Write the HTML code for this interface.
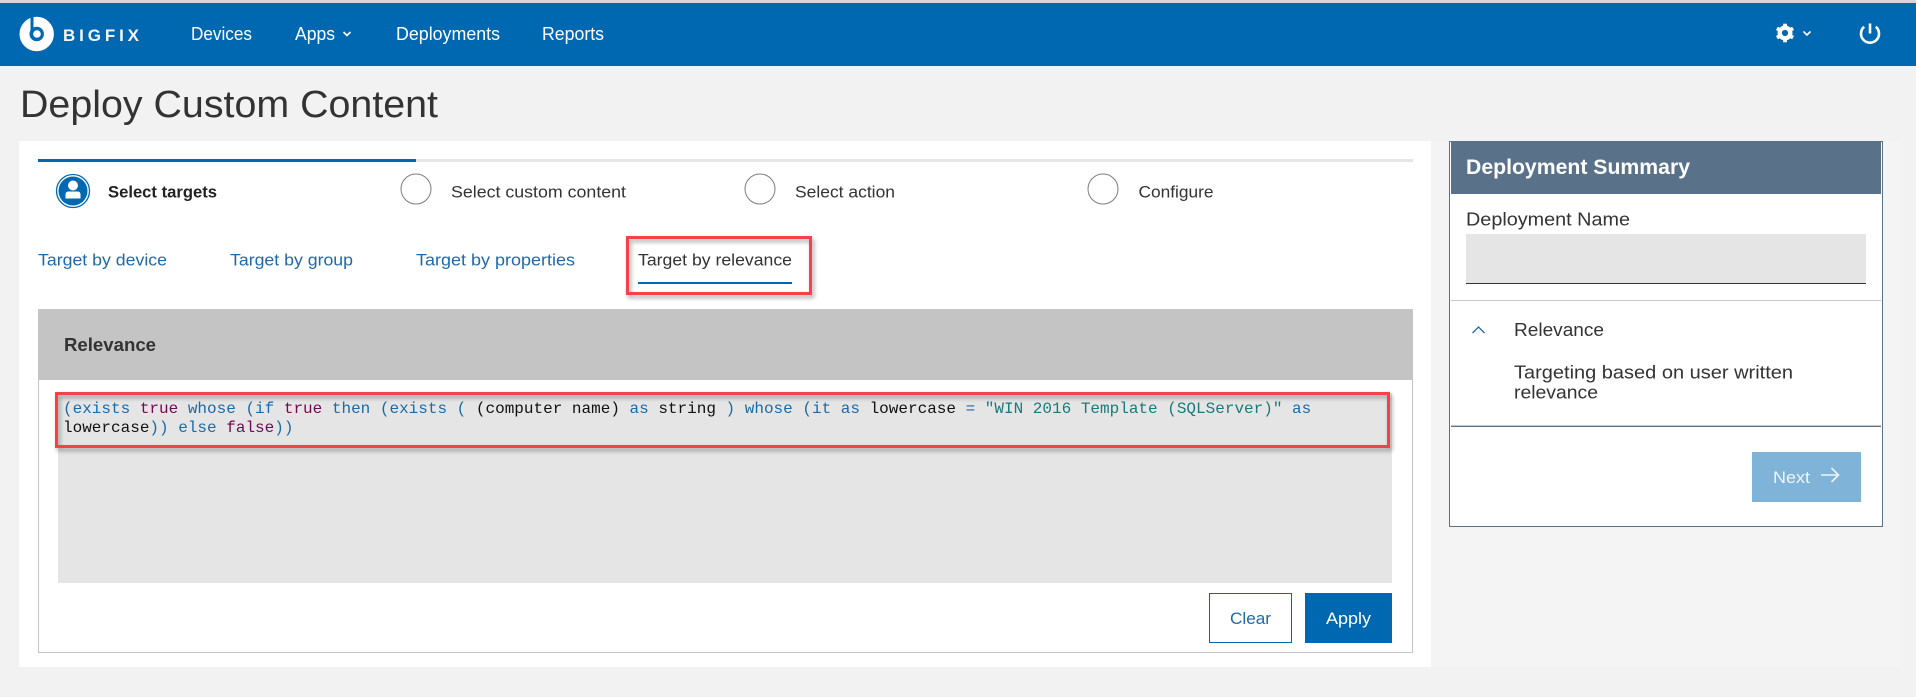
<!DOCTYPE html>
<html lang="en"><head><meta charset="utf-8"><title>Deploy Custom Content</title>
<style>
html,body{margin:0;padding:0;width:1916px;height:697px;overflow:hidden;background:#f2f2f2}
svg{display:block}
text{font-family:"Liberation Sans",Arial,sans-serif;fill:#333}
.m{font-family:"Liberation Mono",monospace;font-size:16px;white-space:pre}
.nav{fill:#fff;font-size:18px}
.link{fill:#1f69ab;font-size:17px}
.bl{fill:#1c6aa6}.pu{fill:#6f0a55}.bk{fill:#111}.te{fill:#1a7a7a}
.red{fill:none;stroke:#f44347;stroke-width:3;filter:drop-shadow(2px 3px 2px rgba(0,0,0,.35))}
</style></head><body>
<svg width="1916" height="697" viewBox="0 0 1916 697" xmlns="http://www.w3.org/2000/svg">
<rect width="1916" height="697" fill="#f2f2f2"/>
<rect width="1916" height="3" fill="#d6d6d6"/>
<rect y="3" width="1916" height="63" fill="#0067b1"/>

<!-- logo -->
<circle cx="36.700" cy="34" r="12.200" fill="none" stroke="#fff" stroke-width="10"/>
<path d="M30.500 15 L33.500 15 L33.500 29 L30.500 32 Z" fill="#0067b1"/>
<circle cx="37" cy="34" r="3.800" fill="#fff"/>
<text x="63" y="41" font-size="17" font-weight="bold" style="fill:#f4f8fb" textLength="76" lengthAdjust="spacing">BIGFIX</text>

<!-- nav -->
<text class="nav" x="191" y="40" textLength="61" lengthAdjust="spacingAndGlyphs">Devices</text>
<text class="nav" x="295" y="40" textLength="40" lengthAdjust="spacingAndGlyphs">Apps</text>
<path d="M343.500 32 L347 35.500 L350.500 32" fill="none" stroke="#fff" stroke-width="1.600"/>
<text class="nav" x="396" y="40" textLength="104" lengthAdjust="spacingAndGlyphs">Deployments</text>
<text class="nav" x="542" y="40" textLength="62" lengthAdjust="spacingAndGlyphs">Reports</text>

<!-- gear -->
<g transform="translate(1785 33)">
<circle r="5.300" fill="none" stroke="#fff" stroke-width="4.400"/>
<g stroke="#fff" stroke-width="3.800" stroke-linecap="butt">
<path d="M0 -9.300V-6"/><path d="M0 9.300V6"/><path d="M-8.100 -4.650L-5.200 -3"/><path d="M8.100 -4.650L5.200 -3"/><path d="M-8.100 4.650L-5.200 3"/><path d="M8.100 4.650L5.200 3"/>
</g></g>
<path d="M1803.500 31.500 L1807 35 L1810.500 31.500" fill="none" stroke="#fff" stroke-width="1.600"/>
<!-- power -->
<path d="M1864.200 26.800 A9 9 0 1 0 1875.800 26.800" fill="none" stroke="#fff" stroke-width="2.600"/>
<path d="M1870 23.500V33.500" stroke="#fff" stroke-width="2.600"/>

<text x="20" y="117" font-size="38" textLength="418" lengthAdjust="spacingAndGlyphs">Deploy Custom Content</text>

<!-- main panels -->
<rect x="1431" y="141" width="469" height="526" fill="#f4f4f4"/>
<rect x="19" y="141" width="1412" height="526" fill="#fff"/>

<!-- stepper -->
<rect x="38" y="159" width="1375" height="3" fill="#e5e5e5"/>
<rect x="38" y="159" width="378" height="3" fill="#0067b1"/>
<circle cx="73" cy="191" r="16.500" fill="#fff" stroke="#0067b1" stroke-width="1.300"/>
<circle cx="73" cy="191" r="14.500" fill="#0067b1"/>
<circle cx="73" cy="185.500" r="5" fill="#fff"/>
<path d="M65.500 198.500V194.500Q65.500 191.500 68.500 191.500H77.500Q80.500 191.500 80.500 194.500V198.500Z" fill="#fff"/>
<g fill="#fff" stroke="#7d7d7d" stroke-width="1">
<circle cx="416" cy="189" r="15"/><circle cx="760" cy="189" r="15"/><circle cx="1103" cy="189" r="15"/>
</g>
<g font-size="17">
<text x="108" y="197.500" font-weight="bold" style="fill:#222" textLength="109" lengthAdjust="spacingAndGlyphs">Select targets</text>
<text x="451" y="197.500" textLength="175" lengthAdjust="spacingAndGlyphs">Select custom content</text>
<text x="795" y="197.500" textLength="100" lengthAdjust="spacingAndGlyphs">Select action</text>
<text x="1138.500" y="197.500" textLength="75" lengthAdjust="spacingAndGlyphs">Configure</text>
</g>

<!-- tabs -->
<text class="link" x="38" y="265.500" textLength="129" lengthAdjust="spacingAndGlyphs">Target by device</text>
<text class="link" x="230" y="265.500" textLength="123" lengthAdjust="spacingAndGlyphs">Target by group</text>
<text class="link" x="416" y="265.500" textLength="159" lengthAdjust="spacingAndGlyphs">Target by properties</text>
<text x="638" y="265.500" font-size="17" textLength="154" lengthAdjust="spacingAndGlyphs">Target by relevance</text>
<rect x="638" y="282" width="154" height="2" fill="#0067b1"/>
<rect class="red" x="627.500" y="237.500" width="183" height="56"/>

<!-- relevance box -->
<rect x="38.500" y="309.500" width="1374" height="343" fill="#fff" stroke="#c4c4c4"/>
<rect x="38" y="309" width="1375" height="71" fill="#c4c4c4"/>
<text x="64" y="351" font-size="18" font-weight="bold" textLength="92" lengthAdjust="spacingAndGlyphs">Relevance</text>
<rect x="58" y="393" width="1334" height="190" fill="#e5e5e5"/>
<text class="m" x="63" y="413" xml:space="preserve"><tspan class="bl">(exists </tspan><tspan class="pu">true </tspan><tspan class="bl">whose (if </tspan><tspan class="pu">true </tspan><tspan class="bl">then (exists ( </tspan><tspan class="bk">(computer name) </tspan><tspan class="bl">as </tspan><tspan class="bk">string </tspan><tspan class="bl">) whose (it as </tspan><tspan class="bk">lowercase </tspan><tspan class="bl">= </tspan><tspan class="te">"WIN 2016 Template (SQLServer)" </tspan><tspan class="bl">as</tspan></text>
<text class="m" x="63" y="432" xml:space="preserve"><tspan class="bk">lowercase</tspan><tspan class="bl">)) else </tspan><tspan class="pu">false</tspan><tspan class="bl">))</tspan></text>
<rect class="red" x="56.500" y="393.500" width="1332" height="53"/>

<!-- buttons -->
<rect x="1209.500" y="593.500" width="82" height="49" fill="#fff" stroke="#0067b1"/>
<text x="1230" y="624" font-size="17" style="fill:#1f69ab" textLength="41" lengthAdjust="spacingAndGlyphs">Clear</text>
<rect x="1305" y="593" width="87" height="50" fill="#0067b1"/>
<text x="1326" y="624" font-size="17" style="fill:#fff" textLength="45" lengthAdjust="spacingAndGlyphs">Apply</text>

<!-- summary -->
<rect x="1449.500" y="141.500" width="433" height="385" fill="#fff" stroke="#5a7289"/>
<rect x="1451" y="141" width="430" height="53" fill="#5a7289"/>
<text x="1466" y="174" font-size="21" font-weight="bold" style="fill:#fff" textLength="224" lengthAdjust="spacingAndGlyphs">Deployment Summary</text>
<text x="1466" y="225.500" font-size="18" textLength="164" lengthAdjust="spacingAndGlyphs">Deployment Name</text>
<rect x="1466" y="234" width="400" height="49" fill="#e5e5e5"/>
<rect x="1466" y="283" width="400" height="1" fill="#333"/>
<rect x="1451" y="300" width="430" height="1" fill="#c8c8c8"/>
<path d="M1472.500 333 L1478.500 327 L1484.500 333" fill="none" stroke="#1f69ab" stroke-width="1.300"/>
<text x="1514" y="336" font-size="18" textLength="90" lengthAdjust="spacingAndGlyphs">Relevance</text>
<text x="1514" y="378.500" font-size="18" textLength="279" lengthAdjust="spacingAndGlyphs">Targeting based on user written</text>
<text x="1514" y="398.500" font-size="18" textLength="84" lengthAdjust="spacingAndGlyphs">relevance</text>
<rect x="1451" y="425" width="430" height="1" fill="#c8c8c8"/>
<rect x="1451" y="426" width="430" height="1" fill="#5a7289"/>
<rect x="1752" y="452" width="109" height="50" fill="#80b3d8"/>
<text x="1773" y="483" font-size="17" style="fill:#eef5fb" textLength="37" lengthAdjust="spacingAndGlyphs">Next</text>
<path d="M1821 475H1838.500M1831.500 468L1838.500 475L1831.500 482" fill="none" stroke="#eef5fb" stroke-width="1.600"/>
</svg>
</body></html>
